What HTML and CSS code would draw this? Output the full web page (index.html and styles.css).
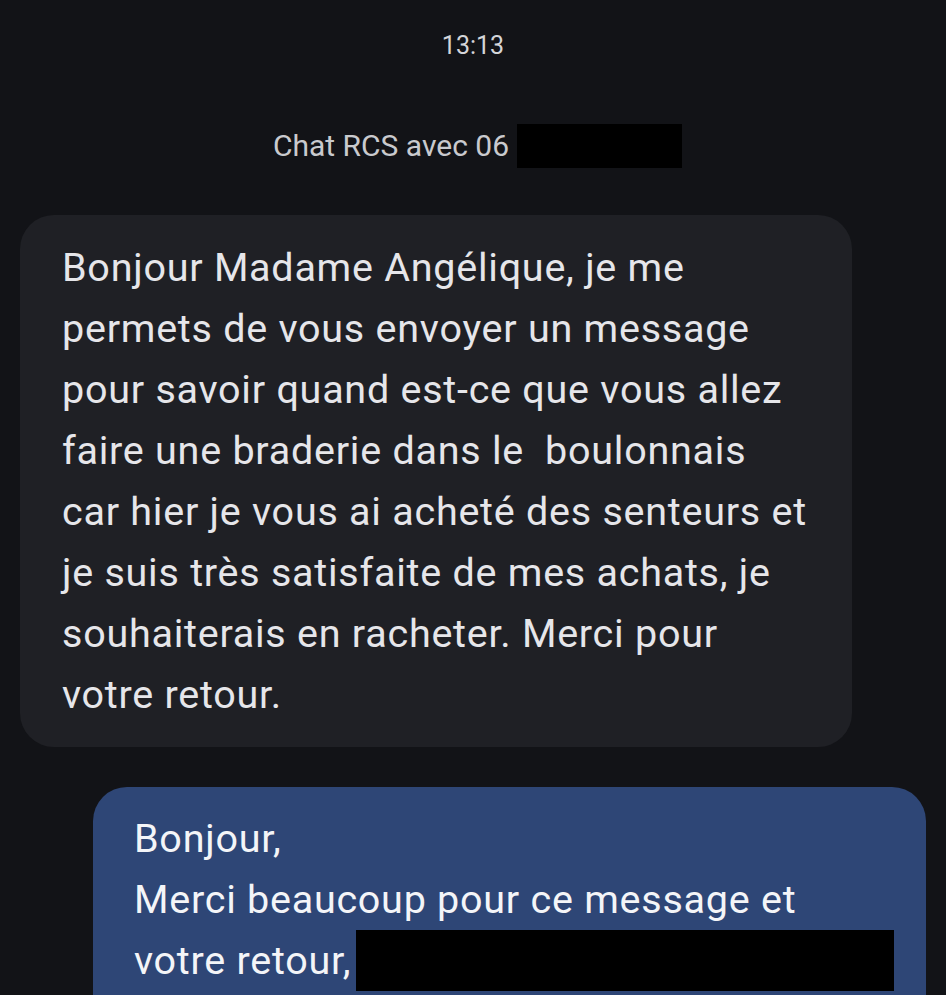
FILE: index.html
```html
<!DOCTYPE html>
<html lang="fr">
<head>
<meta charset="utf-8">
<title>Chat RCS</title>
<link rel="stylesheet" href="styles.css">
</head>
<body>
<div class="screen">
  <div class="time">13:13</div>
  <div class="chat-info">
    <span class="chat-label">Chat RCS avec 06</span>
    <span class="redact redact-number"></span>
  </div>
  <div class="row row-in">
    <div class="bubble bubble-in">
      <span class="line">Bonjour Madame Angélique, je me</span>
      <span class="line">permets de vous envoyer un message</span>
      <span class="line">pour savoir quand est-ce que vous allez</span>
      <span class="line">faire une braderie dans le &nbsp;boulonnais</span>
      <span class="line">car hier je vous ai acheté des senteurs et</span>
      <span class="line">je suis très satisfaite de mes achats, je</span>
      <span class="line">souhaiterais en racheter. Merci pour</span>
      <span class="line">votre retour.</span>
    </div>
  </div>
  <div class="row row-out">
    <div class="bubble bubble-out">
      <span class="line">Bonjour,</span>
      <span class="line">Merci beaucoup pour ce message et</span>
      <span class="line line-flex">votre retour,<span class="redact redact-name"></span></span>
    </div>
  </div>
</div>
</body>
</html>
```
FILE: styles.css
```css
html, body {
  margin: 0;
  padding: 0;
  background: #121317;
}
body {
  width: 946px;
  height: 995px;
  overflow: hidden;
  font-family: Roboto, "Liberation Sans", sans-serif;
}
.screen {
  display: flex;
  flex-direction: column;
  height: 995px;
  overflow: hidden;
  padding-top: 31px;
  box-sizing: border-box;
}
.time {
  text-align: center;
  color: #d4d5d9;
  font-size: 25px;
  line-height: 30px;
}
.chat-info {
  display: flex;
  justify-content: center;
  align-items: center;
  gap: 8px;
  margin-top: 63px;
  padding-left: 9px;
  height: 44px;
}
.chat-label {
  color: #c9cace;
  font-size: 30px;
  line-height: 36px;
}
.redact {
  display: inline-block;
  flex-shrink: 0;
  background: #000;
}
.redact-number {
  width: 165px;
  height: 44px;
}
.row {
  display: flex;
}
.row-in {
  margin-top: 47px;
  padding-left: 20px;
}
.row-out {
  margin-top: 40px;
  padding-left: 93px;
}
.bubble {
  display: flex;
  flex-direction: column;
  font-size: 39.5px;
  letter-spacing: 0.75px;
  line-height: 61px;
  border-radius: 34px;
}
.bubble-in {
  width: 832px;
  box-sizing: border-box;
  padding: 22px 20px 22px 42px;
  background: #1f2025;
  color: #e6e6ea;
}
.bubble-out {
  width: 833px;
  box-sizing: border-box;
  padding: 21px 20px 40px 41px;
  background: #2e4676;
  color: #f4f5f8;
}
.line {
  display: block;
  white-space: nowrap;
}
.line-flex {
  display: flex;
  align-items: center;
}
.redact-name {
  width: 538px;
  height: 61px;
  margin-left: 5px;
}
```
